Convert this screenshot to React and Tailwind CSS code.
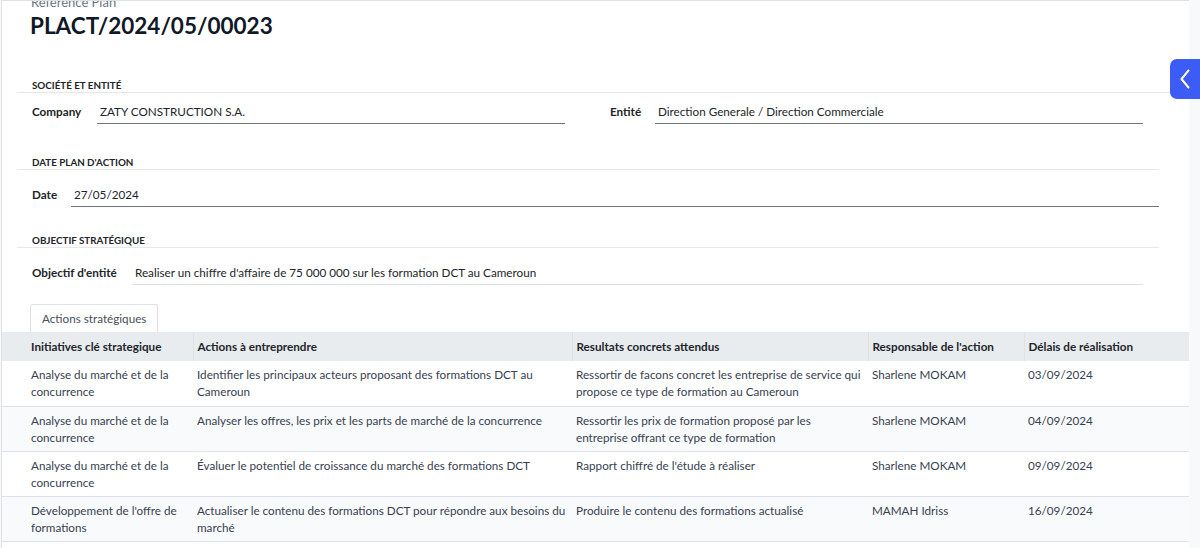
import React from 'react';

const rows = [
  {
    initiative: 'Analyse du marché et de la concurrence',
    action: 'Identifier les principaux acteurs proposant des formations DCT au Cameroun',
    result: 'Ressortir de facons concret les entreprise de service qui propose ce type de formation au Cameroun',
    owner: 'Sharlene MOKAM',
    due: '03/09/2024',
  },
  {
    initiative: 'Analyse du marché et de la concurrence',
    action: 'Analyser les offres, les prix et les parts de marché de la concurrence',
    result: 'Ressortir les prix de formation proposé par les entreprise offrant ce type de formation',
    owner: 'Sharlene MOKAM',
    due: '04/09/2024',
  },
  {
    initiative: 'Analyse du marché et de la concurrence',
    action: 'Évaluer le potentiel de croissance du marché des formations DCT',
    result: "Rapport chiffré de l'étude à réaliser",
    owner: 'Sharlene MOKAM',
    due: '09/09/2024',
  },
  {
    initiative: "Développement de l'offre de formations",
    action: 'Actualiser le contenu des formations DCT pour répondre aux besoins du marché',
    result: 'Produire le contenu des formations actualisé',
    owner: 'MAMAH Idriss',
    due: '16/09/2024',
  },
];

const SectionTitle = ({ children, wide }) => (
  <div className={`pb-[1px] border-b border-[#e5e7eb] ${wide ? '' : 'mr-[30px]'}`}>
    <div className="pl-[15px] text-[9.8px] leading-[12px] font-bold uppercase text-[#212529]">{children}</div>
  </div>
);

const Field = ({ label, value, labelW, inputW, light }) => (
  <div className="flex items-start">
    <div className="font-bold text-[#212529]" style={{ width: labelW }}>{label}</div>
    <div
      className={`h-[21px] pl-[3px] text-[#212529] border-b ${light ? 'border-[#dee2e6]' : 'border-[#6c757d]'}`}
      style={{ width: inputW }}
    >
      {value}
    </div>
  </div>
);

export default function App() {
  return (
    <div className="relative w-[1200px] h-[548px] overflow-hidden bg-[#f8f9fa] flex items-start text-[11.7px] leading-[17px]" style={{ fontFamily: 'Lato, "Noto Sans", sans-serif' }}>
      {/* form sheet */}
      <div className="w-[1188px] h-[548px] shrink-0 ml-[1px] bg-white border-l border-t border-[#dee2e6] overflow-hidden">
        <div className="pl-[29px] h-[9px] overflow-hidden">
          <div className="-mt-[7px] text-[13px] text-[#6c757d]">Reference Plan</div>
        </div>
        <h1 className="pl-[28px] mt-[2px] text-[22.5px] leading-[28px] font-bold text-[#111827]">PLACT/2024/05/00023</h1>

        <div className="pl-[15px]">
          <div className="mt-[39px]">
            <SectionTitle wide>Société et entité</SectionTitle>
          </div>
          <div className="flex pl-[15px] mt-[10px]">
            <div className="w-[578px]">
              <Field label="Company" value="ZATY CONSTRUCTION S.A." labelW={65} inputW={468} />
            </div>
            <Field label="Entité" value="Direction Generale / Direction Commerciale" labelW={45} inputW={488} />
          </div>

          <div className="mt-[32px]">
            <SectionTitle>Date plan d'action</SectionTitle>
          </div>
          <div className="pl-[15px] mt-[16px]">
            <Field label="Date" value="27/05/2024" labelW={39} inputW={1088} />
          </div>

          <div className="mt-[27px]">
            <SectionTitle>Objectif stratégique</SectionTitle>
          </div>
          <div className="pl-[15px] mt-[16px]">
            <Field
              label="Objectif d'entité"
              value="Realiser un chiffre d'affaire de 75 000 000 sur les formation DCT au Cameroun"
              labelW={100}
              inputW={1011}
              light
            />
          </div>

          {/* notebook tabs */}
          <div className="flex pl-[13px] mt-[19px]">
            <div className="h-[28px] px-[11px] flex items-center bg-white border border-b-0 border-[#dee2e6] rounded-t-[3px] text-[#495057]">
              Actions stratégiques
            </div>
          </div>
        </div>

        <table className="table-fixed w-[1187px] border-collapse text-left">
          <colgroup>
            <col className="w-[191px]" />
            <col className="w-[379px]" />
            <col className="w-[296px]" />
            <col className="w-[156px]" />
            <col className="w-[165px]" />
          </colgroup>
          <thead>
            <tr className="h-[29px] bg-[#e9ecef]">
              <th className="pl-[29px] font-bold text-[#212529] border-r border-[#dee2e6]">Initiatives clé strategique</th>
              <th className="pl-[4px] font-bold text-[#212529] border-r border-[#dee2e6]">Actions à entreprendre</th>
              <th className="pl-[4px] font-bold text-[#212529] border-r border-[#dee2e6]">Resultats concrets attendus</th>
              <th className="pl-[4px] font-bold text-[#212529] border-r border-[#dee2e6]">Responsable de l'action</th>
              <th className="pl-[4px] font-bold text-[#212529]">Délais de réalisation</th>
            </tr>
          </thead>
          <tbody className="text-[#374151]">
            {rows.map((r, i) => (
              <tr key={i} className={`h-[45px] border-b border-[#dee2e6] align-top ${i % 2 ? 'bg-[#f9fafb]' : 'bg-white'}`}>
                <td className="pl-[29px] pr-[4px] pt-[5px]">{r.initiative}</td>
                <td className="pl-[4px] pr-[4px] pt-[5px]">{r.action}</td>
                <td className="pl-[4px] pr-[4px] pt-[5px]">{r.result}</td>
                <td className="pl-[4px] pr-[4px] pt-[5px]">{r.owner}</td>
                <td className="pl-[4px] pr-[4px] pt-[5px]">{r.due}</td>
              </tr>
            ))}
            <tr className="h-[45px]">
              <td colSpan={5} />
            </tr>
          </tbody>
        </table>
      </div>

      {/* chatter toggle */}
      <button className="absolute right-0 top-[59px] w-[30px] h-[40px] rounded-l-[7px] bg-[#3d5bf5] flex items-center justify-center">
        <svg width="10" height="20" viewBox="0 0 10 20" fill="none" stroke="white" strokeWidth="2" strokeLinecap="round" strokeLinejoin="round">
          <path d="M8.5 1.5 L1.5 10 L8.5 18.5" />
        </svg>
      </button>
    </div>
  );
}
